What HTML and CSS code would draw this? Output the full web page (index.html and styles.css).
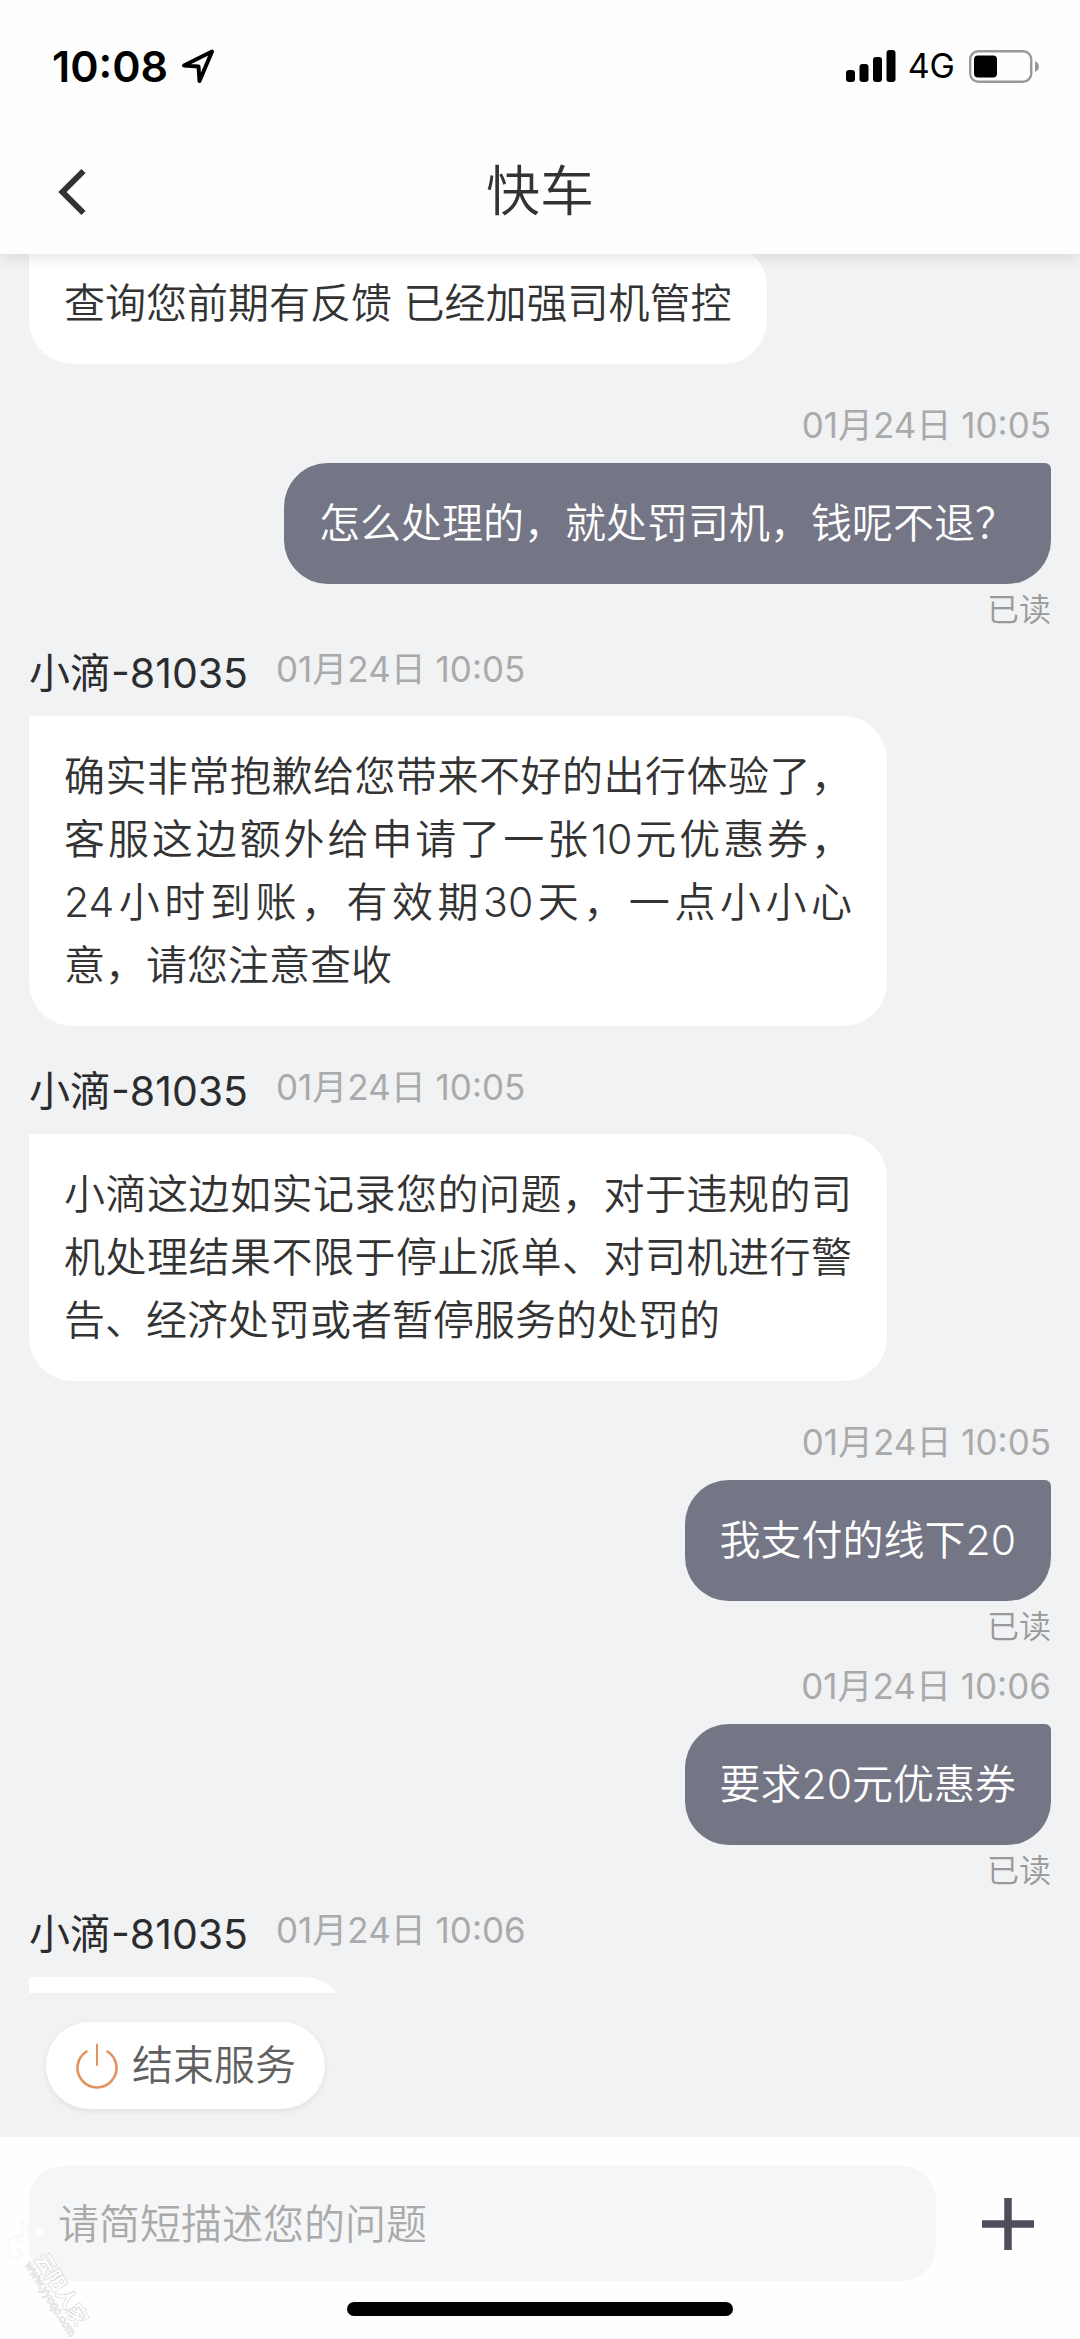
FILE: index.html
```html
<!DOCTYPE html>
<html lang="zh-CN">
<head>
<meta charset="utf-8">
<meta name="viewport" content="width=device-width, initial-scale=1">
<title>快车</title>
<link rel="stylesheet" href="styles.css">
</head>
<body>
<div class="app">
  <header class="header">
    <div class="status">
      <span class="status-time">10:08</span>
      <svg class="status-location" width="36" height="36" viewBox="0 0 36 36" aria-hidden="true"><path d="M4 17.500L32 3.500L19.500 33L18.500 18.500Z" fill="none" stroke="#000" stroke-width="4" stroke-linejoin="round"/></svg>
      <svg class="status-signal" width="50" height="32" viewBox="0 0 50 32" aria-hidden="true"><rect x="0" y="20" width="9" height="12" rx="3"/><rect x="13.500" y="14" width="9" height="18" rx="3"/><rect x="27" y="7" width="9" height="25" rx="3"/><rect x="40.500" y="0" width="9" height="32" rx="3"/></svg>
      <span class="status-network">4G</span>
      <svg class="status-battery" width="70" height="33" viewBox="0 0 70 33" aria-hidden="true"><rect x="1.200" y="1.200" width="61" height="30.600" rx="8" fill="none" stroke="#999" stroke-width="2.400"/><rect x="5" y="5.500" width="23" height="22" rx="4"/><path d="M66 11v11q4-2 4-5.500T66 11z" fill="#999"/></svg>
    </div>
    <nav class="nav">
      <button class="nav-back" type="button" aria-label="返回"><svg width="30" height="48" viewBox="0 0 30 48"><path d="M25.500 3L4.500 24L25.500 45" fill="none" stroke="#333" stroke-width="6"/></svg></button>
      <h1 class="nav-title">快车</h1>
    </nav>
  </header>

  <main class="chat">
    <div class="messages">
      <article class="message message-agent">
        <p class="bubble">查询您前期有反馈 已经加强司机管控</p>
      </article>
      <article class="message message-user">
        <time class="message-time">01月24日 10:05</time>
        <p class="bubble">怎么处理的，就处罚司机，钱呢不退？</p>
        <span class="message-read">已读</span>
      </article>
      <article class="message message-agent">
        <div class="message-head"><span class="message-name">小滴-81035</span><time class="message-time">01月24日 10:05</time></div>
        <p class="bubble">确实非常抱歉给您带来不好的出行体验了，客服这边额外给申请了一张10元优惠券，24小时到账，有效期30天，一点小小心意，请您注意查收</p>
      </article>
      <article class="message message-agent">
        <div class="message-head"><span class="message-name">小滴-81035</span><time class="message-time">01月24日 10:05</time></div>
        <p class="bubble">小滴这边如实记录您的问题，对于违规的司机处理结果不限于停止派单、对司机进行警告、经济处罚或者暂停服务的处罚的</p>
      </article>
      <article class="message message-user">
        <time class="message-time">01月24日 10:05</time>
        <p class="bubble">我支付的线下20</p>
        <span class="message-read">已读</span>
      </article>
      <article class="message message-user">
        <time class="message-time">01月24日 10:06</time>
        <p class="bubble">要求20元优惠券</p>
        <span class="message-read">已读</span>
      </article>
      <article class="message message-agent">
        <div class="message-head"><span class="message-name">小滴-81035</span><time class="message-time">01月24日 10:06</time></div>
        <div class="bubble bubble-short"></div>
      </article>
    </div>
  </main>

  <div class="actions">
    <button class="end-button" type="button">
      <svg width="42" height="46" viewBox="0 0 42 46" aria-hidden="true"><path d="M10.500 8.500A19.500 19.500 0 1 0 31.500 8.500" fill="none" stroke="#e2925e" stroke-width="2.600" stroke-linecap="round"/><path d="M21 1.500V22" stroke="#e2925e" stroke-width="2" stroke-linecap="round"/></svg>
      <span class="end-label">结束服务</span>
    </button>
  </div>

  <footer class="footer">
    <form class="composer">
      <input class="composer-input" type="text" aria-label="问题描述" placeholder="请简短描述您的问题">
      <button class="composer-add" type="button" aria-label="更多"><svg width="52" height="52" viewBox="0 0 52 52"><path d="M26 0V52M0 26H52" stroke="#4d4d5b" stroke-width="7.500"/></svg></button>
    </form>
    <div class="home-indicator"></div>
    <svg class="watermark" width="100" height="124" viewBox="0 0 100 124" aria-hidden="true">
      <circle cx="39" cy="17" r="5" fill="#fcfcfd"/>
      <path d="M20 6Q30 8 28 22Q40 28 50 38Q38 38 32 34M20 6Q26 18 20 22Q8 20 8 32Q9 44 18 44Q24 38 16 33M14 27Q30 24 40 38" fill="none" stroke="#faf7f7" stroke-width="2"/>
      <g transform="translate(34 44) rotate(58)">
        <text class="watermark-name" x="0" y="0">云阳人家</text>
        <text class="watermark-url" x="0" y="11">www.yycqc.com</text>
      </g>
    </svg>
  </footer>
</div>
</body>
</html>
```

FILE: styles.css
```css
* {
  box-sizing: border-box;
}

body {
  margin: 0;
  background: #f1f2f4;
  color: #333;
  font-family: Inter, "Noto Sans CJK SC", sans-serif;
  font-size: 41px;
  font-weight: 350;
}

button,
input {
  border: 0;
  padding: 0;
  background: none;
  color: inherit;
  font: inherit;
}

svg {
  display: block;
  flex: none;
}

.app {
  display: flex;
  flex-direction: column;
  height: 100vh;
}

.header {
  position: relative;
  z-index: 1;
  flex: none;
  background: #fefefe;
  box-shadow: 0 2px 16px rgba(0, 0, 0, 0.12);
}

.status {
  display: flex;
  align-items: center;
  padding: 44px 41px 38px 52px;
  color: #000;
  line-height: 44px;
}

.status-time {
  font-size: 43px;
  font-weight: 600;
}

.status-location {
  margin-left: 12px;
}

.status-signal {
  margin-left: auto;
}

.status-network {
  margin: 0 14px 0 12px;
  font-size: 34px;
  font-weight: 400;
}

.nav {
  display: grid;
  grid-template-columns: 1fr auto 1fr;
  align-items: center;
  height: 128px;
  padding: 4px 58px 0;
}

.nav-back {
  justify-self: start;
}

.nav-title {
  margin: 0;
  font-size: 54px;
  font-weight: 350;
  line-height: 80px;
}

.chat {
  flex: 1;
  min-height: 0;
  overflow: hidden;
}

.messages {
  display: flex;
  flex-direction: column;
  margin-top: -11px;
  padding: 0 29px;
}

.message {
  display: flex;
  flex-direction: column;
  align-items: flex-start;
  margin-bottom: 37px;
}

.message-user {
  align-items: flex-end;
  margin-bottom: 14px;
}

.message-head {
  display: flex;
  gap: 28px;
  margin-bottom: 15px;
}

.message-name {
  color: #2c2c2e;
  font-size: 41px;
  font-weight: 400;
  line-height: 56px;
}

.message-time {
  color: #aaa;
  font-size: 35px;
  font-weight: 400;
  line-height: 48px;
}

.bubble {
  max-width: 858px;
  margin: 0;
  padding: 29px 35px;
  border-radius: 0 44px 44px 44px;
  background: #fff;
  line-height: 63px;
  text-align: justify;
}

.message-user .bubble {
  margin-top: 14px;
  border-radius: 44px 6px 44px 44px;
  background: #747585;
  color: #fff;
}

.bubble-short {
  width: 318px;
  height: 121px;
}

.message-read {
  margin-top: 5px;
  color: #999;
  font-size: 32px;
  line-height: 42px;
}

.actions {
  display: flex;
  flex: none;
  padding: 29px 46px 28px;
}

.end-button {
  display: flex;
  align-items: center;
  gap: 14px;
  height: 87px;
  padding: 0 29px 0 30px;
  border-radius: 44px;
  background: #fff;
  box-shadow: 0 2px 6px rgba(0, 0, 0, 0.08);
  color: #606060;
}

.end-label {
  line-height: 63px;
}

.footer {
  position: relative;
  flex: none;
  padding-bottom: 23px;
  background: #fefefe;
}

.composer {
  display: flex;
  align-items: center;
  gap: 46px;
  padding: 29px 46px 21px 29px;
}

.composer-input {
  flex: 1;
  min-width: 0;
  height: 115px;
  padding: 0 29px;
  border-radius: 34px;
  background: #f5f6f8;
}

.composer-input::placeholder {
  color: #aaa;
  opacity: 1;
}

.home-indicator {
  width: 386px;
  height: 14px;
  margin: 0 auto;
  border-radius: 7px;
  background: #000;
}

.watermark {
  position: absolute;
  bottom: 0;
  left: 0;
  pointer-events: none;
}

.watermark-name,
.watermark-url {
  fill: #fefefe;
  stroke: #ccc;
  stroke-width: 1px;
  paint-order: stroke;
}

.watermark-name {
  font-size: 20px;
  font-weight: 700;
}

.watermark-url {
  font-size: 11px;
}
```
